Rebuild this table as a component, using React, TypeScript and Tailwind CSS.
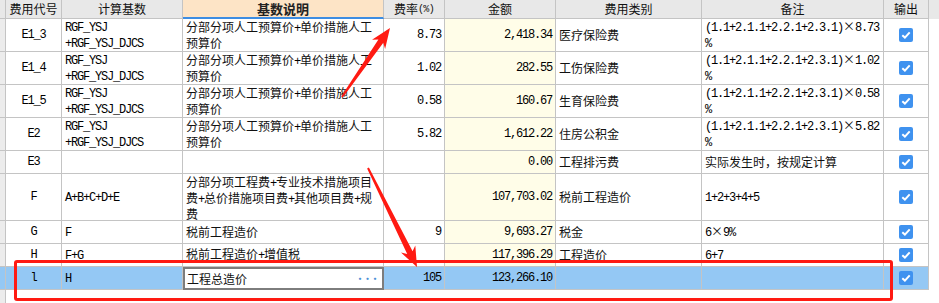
import React from 'react';

type Row = {
  code: string;
  base: string[];
  desc: string[];
  rate: string;
  amt: string;
  type: string;
  note: string[];
  h: string;
  selected?: boolean;
};

const ROWS: Row[] = [
  { code: 'E1_3', base: ['RGF_YSJ', '+RGF_YSJ_DJCS'], desc: ['分部分项人工预算价+单价措施人工', '预算价'], rate: '8.73', amt: '2,418.34', type: '医疗保险费', note: ['(1.1+2.1.1+2.2.1+2.3.1)×8.73', '%'], h: 'h-[33px]' },
  { code: 'E1_4', base: ['RGF_YSJ', '+RGF_YSJ_DJCS'], desc: ['分部分项人工预算价+单价措施人工', '预算价'], rate: '1.02', amt: '282.55', type: '工伤保险费', note: ['(1.1+2.1.1+2.2.1+2.3.1)×1.02', '%'], h: 'h-[33px]' },
  { code: 'E1_5', base: ['RGF_YSJ', '+RGF_YSJ_DJCS'], desc: ['分部分项人工预算价+单价措施人工', '预算价'], rate: '0.58', amt: '160.67', type: '生育保险费', note: ['(1.1+2.1.1+2.2.1+2.3.1)×0.58', '%'], h: 'h-[33px]' },
  { code: 'E2', base: ['RGF_YSJ', '+RGF_YSJ_DJCS'], desc: ['分部分项人工预算价+单价措施人工', '预算价'], rate: '5.82', amt: '1,612.22', type: '住房公积金', note: ['(1.1+2.1.1+2.2.1+2.3.1)×5.82', '%'], h: 'h-[33px]' },
  { code: 'E3', base: [], desc: [], rate: '', amt: '0.00', type: '工程排污费', note: ['实际发生时，按规定计算'], h: 'h-[23px]' },
  { code: 'F', base: ['A+B+C+D+E'], desc: ['分部分项工程费+专业技术措施项目', '费+总价措施项目费+其他项目费+规', '费'], rate: '', amt: '107,703.02', type: '税前工程造价', note: ['1+2+3+4+5'], h: 'h-[47px]' },
  { code: 'G', base: ['F'], desc: ['税前工程造价'], rate: '9', amt: '9,693.27', type: '税金', note: ['6×9%'], h: 'h-[23px]' },
  { code: 'H', base: ['F+G'], desc: ['税前工程造价+增值税'], rate: '', amt: '117,396.29', type: '工程造价', note: ['6+7'], h: 'h-[23px]' },
  { code: 'l', base: ['H'], desc: ['工程总造价'], rate: '105', amt: '123,266.10', type: '', note: [], h: 'h-[23px]', selected: true },
];

// ascii runs get the narrow mono face, the rest stays CJK
const Mixed: React.FC<{ text: string }> = ({ text }) => (
  <>
    {text.split(/([\x20-\x7e]+)/).map((p, i) =>
      /^[\x20-\x7e]+$/.test(p) ? (
        <span key={i} className="font-['Liberation_Mono',monospace] text-[12px] tracking-[-1.2px] text-black">{p}</span>
      ) : (
        <React.Fragment key={i}>{p}</React.Fragment>
      )
    )}
  </>
);

const Lines: React.FC<{ lines: string[] }> = ({ lines }) => (
  <div className="flex flex-col">
    {lines.map((l, i) => (
      <div key={i} className="whitespace-nowrap leading-[14px]"><Mixed text={l} /></div>
    ))}
  </div>
);

const Check = () => (
  <span className="w-[14px] h-[14px] rounded-[2px] bg-[#3f92ef] flex items-center justify-center">
    <svg width="10" height="8" viewBox="0 0 10 8">
      <path d="M1.3 4.2 L3.9 6.6 L8.7 1.4" stroke="#fff" strokeWidth="2" fill="none" />
    </svg>
  </span>
);

const cell = 'border-r border-b border-[#c4c4c4] flex items-center overflow-hidden shrink-0';

const Arrow: React.FC<{ x1: number; y1: number; x2: number; y2: number }> = ({ x1, y1, x2, y2 }) => {
  const len = Math.hypot(x2 - x1, y2 - y1);
  const dx = (x2 - x1) / len, dy = (y2 - y1) / len;
  const nx = -dy, ny = dx;
  const hl = 20;
  const bx = x2 - dx * hl, by = y2 - dy * hl;
  const nb = x2 - dx * (hl - 4), nby = y2 - dy * (hl - 4);
  const p = (x: number, y: number, w: number) => `${(x + nx * w).toFixed(1)},${(y + ny * w).toFixed(1)}`;
  const pts = [
    p(x1, y1, 1), p(nb, nby, 3), p(bx, by, 8), `${x2},${y2}`, p(bx, by, -8), p(nb, nby, -3), p(x1, y1, -1),
  ].join(' ');
  return <polygon points={pts} fill="#ff1a12" />;
};

export default function App() {
  return (
    <div className="relative w-[939px] h-[303px] bg-white overflow-hidden font-['Noto_Sans_CJK_SC',sans-serif] text-[12px] text-[#111]">
      <div className="flex flex-col">
        {/* header */}
        <div className="flex h-[19px] bg-[#e8e8e8]">
          <div className={`${cell} w-[6px]`} />
          <div className={`${cell} w-[56px] justify-center`}>费用代号</div>
          <div className={`${cell} w-[121px] justify-center`}>计算基数</div>
          <div className="w-[201px] shrink-0 border-r border-[#c4c4c4] border-b-2 border-b-[#3d8de2] bg-[#fde4c6] flex items-center justify-center font-bold text-[13px] text-[#222]">基数说明</div>
          <div className={`${cell} w-[61px] justify-center`}>费率<span className="font-['Liberation_Mono',monospace] text-[10px] tracking-[-0.6px]">(%)</span></div>
          <div className={`${cell} w-[111px] justify-center`}>金额</div>
          <div className={`${cell} w-[146px] justify-center`}>费用类别</div>
          <div className={`${cell} w-[182px] justify-center`}>备注</div>
          <div className={`${cell} w-[45px] justify-center`}>输出</div>
        </div>

        {ROWS.map(r => {
          const bg = r.selected ? 'bg-[#94c8f4]' : 'bg-white';
          return (
            <div key={r.code} className={`flex ${r.h}`}>
              <div className={`${cell} w-[6px] ${r.selected ? 'bg-[#94c8f4]' : 'bg-[#ececec]'}`} />
              <div className={`${cell} w-[56px] justify-center ${bg}`}><Mixed text={r.code} /></div>
              <div className={`${cell} w-[121px] pl-[3px] ${bg}`}><Lines lines={r.base} /></div>
              {r.selected ? (
                <div className="w-[201px] shrink-0 border-2 border-[#7d7d7d] bg-white flex items-center justify-between pl-[2px] pr-[4px]">
                  <span>工程总造价</span>
                  <span className="text-[#4a8fd6] text-[9px] font-bold leading-none tracking-[-1.5px]">···</span>
                </div>
              ) : (
                <div className={`${cell} w-[201px] pl-[3px] ${bg} ${r.desc.length > 2 ? 'items-start pt-[1px]' : ''}`}><Lines lines={r.desc} /></div>
              )}
              <div className={`${cell} w-[61px] justify-end pr-[3px] ${bg}`}><Mixed text={r.rate} /></div>
              <div className={`${cell} w-[111px] justify-end pr-[3px] ${r.selected ? 'bg-[#94c8f4]' : 'bg-[#fffde8]'}`}><Mixed text={r.amt} /></div>
              <div className={`${cell} w-[146px] pl-[3px] ${bg}`}>{r.type}</div>
              <div className={`${cell} w-[182px] pl-[3px] ${bg}`}><Lines lines={r.note} /></div>
              <div className={`${cell} w-[45px] justify-center ${bg}`}><Check /></div>
            </div>
          );
        })}
        <div className="flex h-[14px]">
          <div className="w-[6px] bg-[#ececec] border-r border-[#c4c4c4]" />
        </div>
      </div>

      {/* annotation overlay */}
      <div className="absolute left-[14px] top-[260px] w-[879px] h-[41px] border-[3px] border-[#ff1a12] rounded-[3px]" />
      <svg className="absolute left-0 top-0" width="939" height="303">
        <Arrow x1={342} y1={97} x2={390} y2={28} />
        <Arrow x1={368} y1={168} x2={417} y2={267} />
      </svg>
    </div>
  );
}
